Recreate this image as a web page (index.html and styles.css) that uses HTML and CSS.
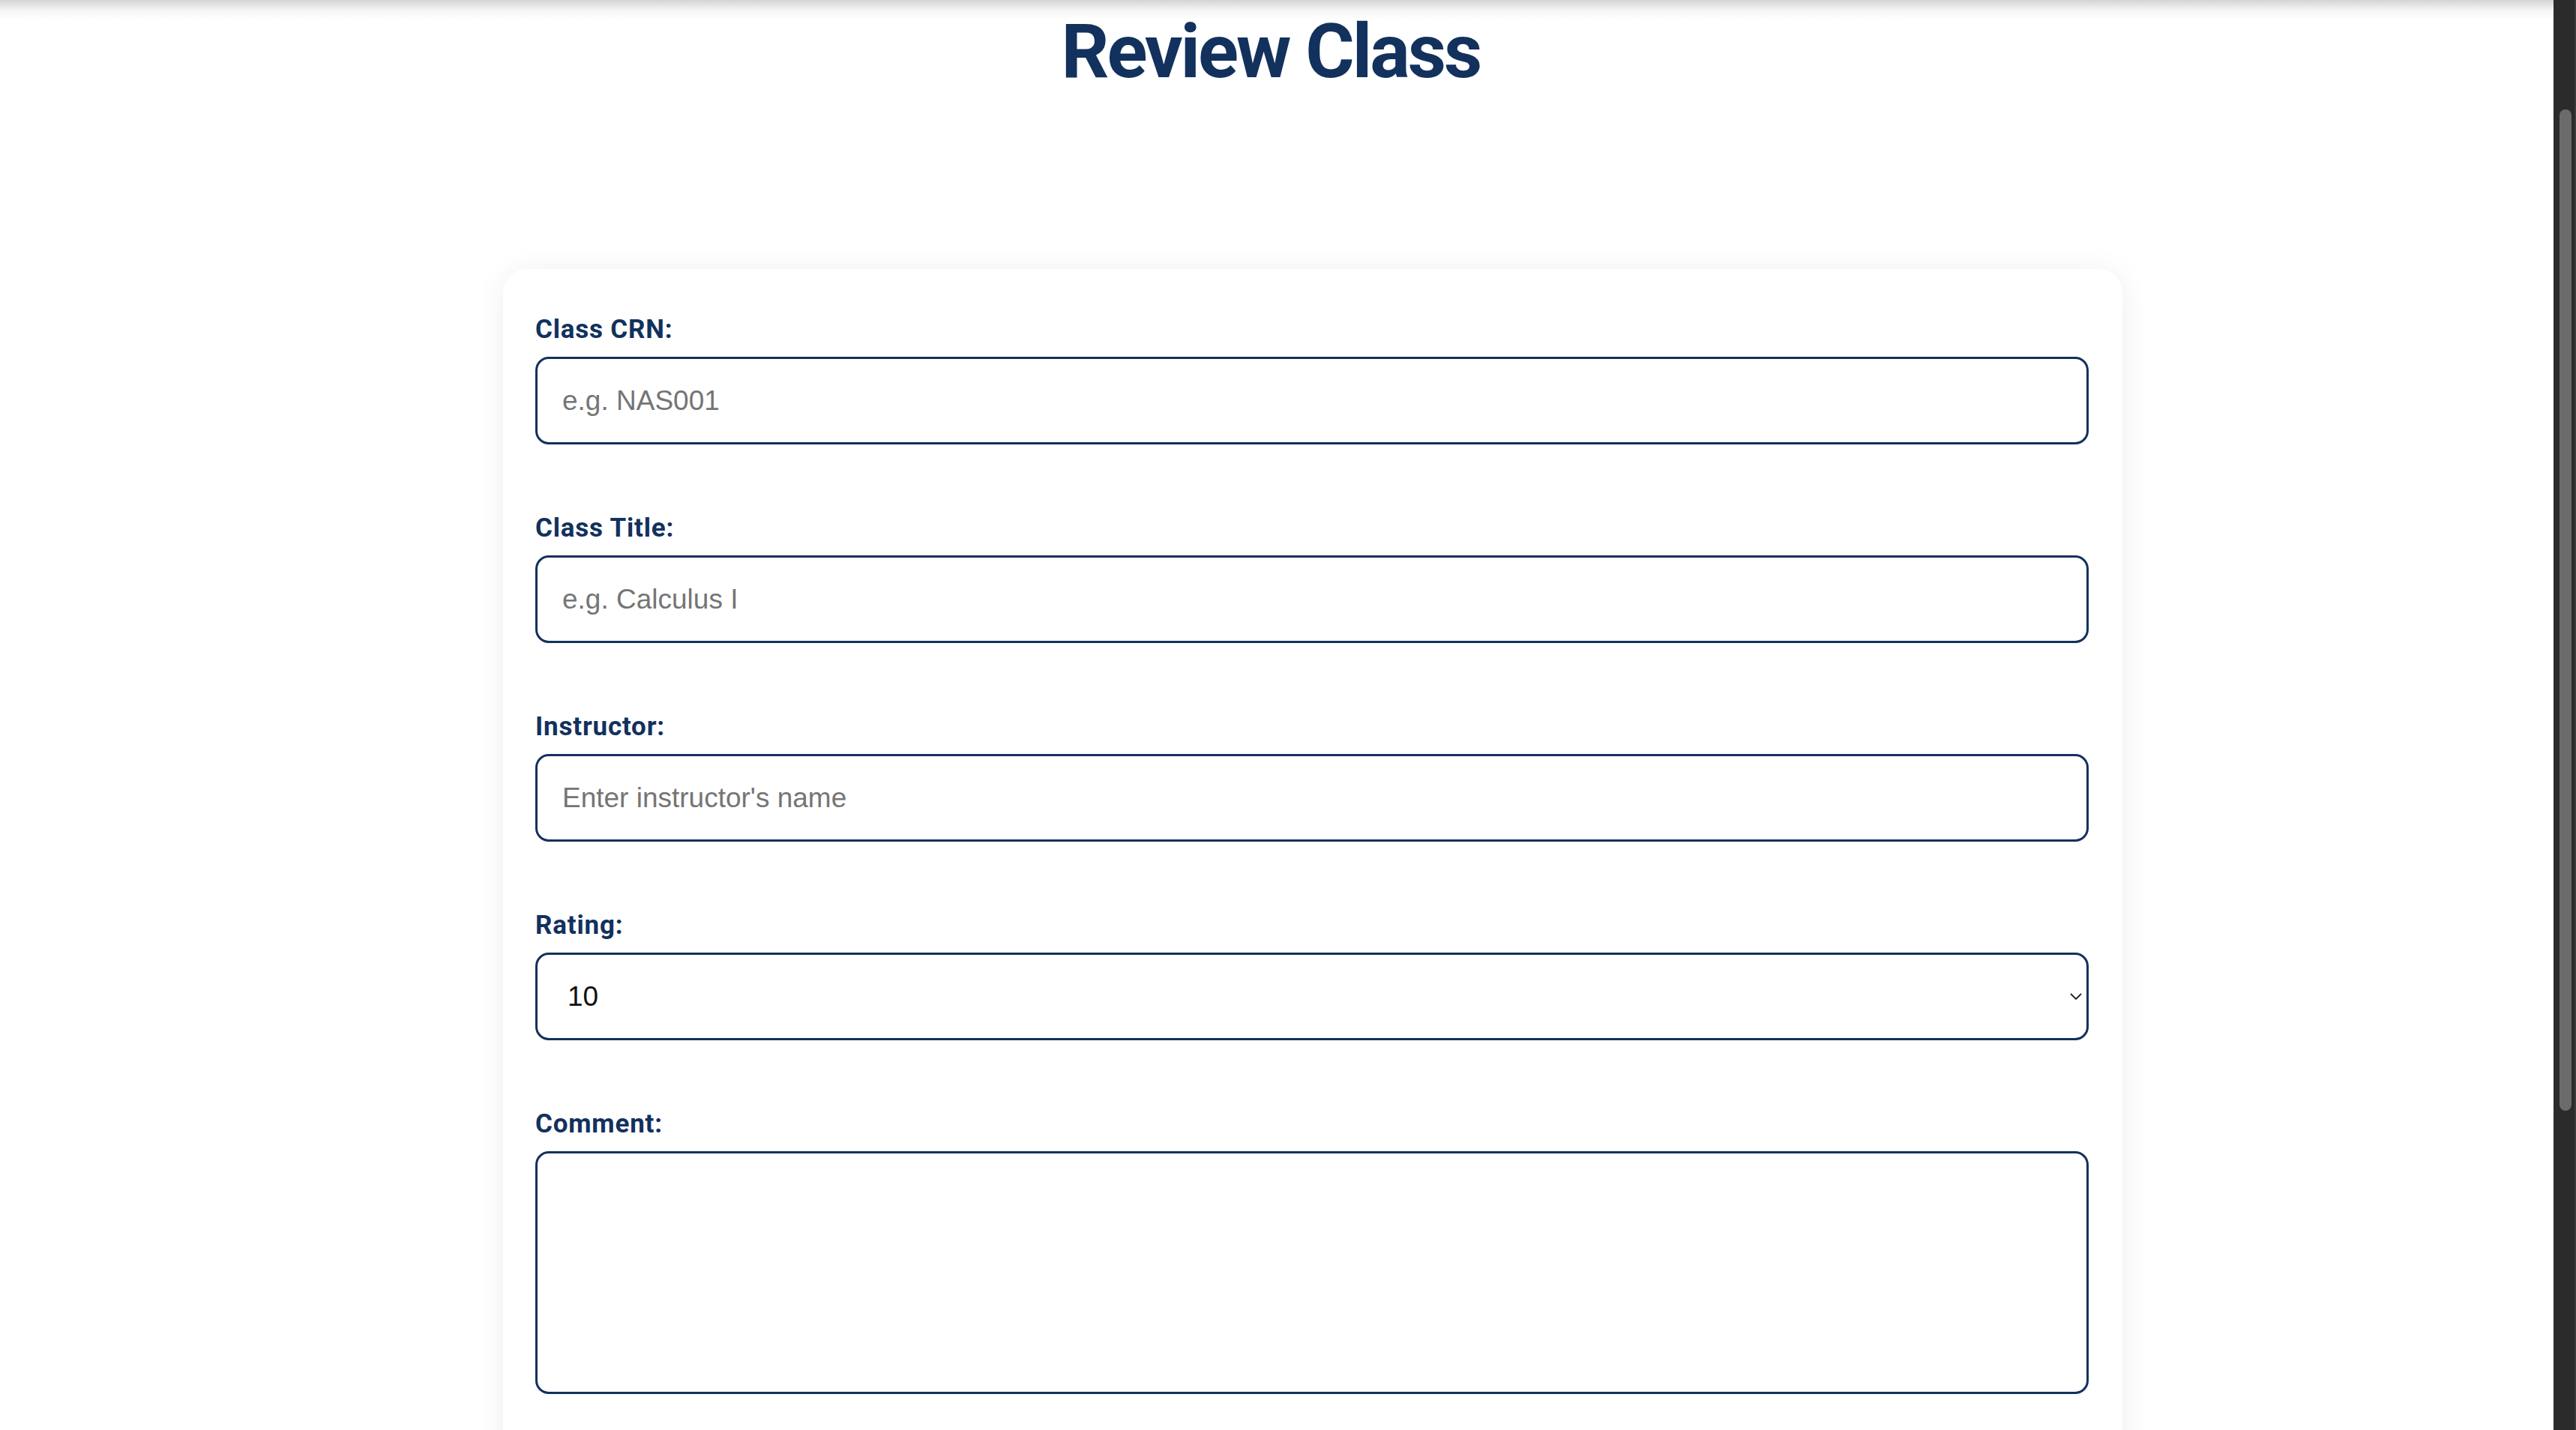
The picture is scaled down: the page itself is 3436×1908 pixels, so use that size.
FILE: index.html
```html
<!DOCTYPE html>
<html lang="en">
<head>
<meta charset="utf-8">
<title>Review Class</title>
<link rel="stylesheet" href="styles.css">
</head>
<body>
<div class="page">
  <h1 class="title">Review Class</h1>
  <form class="card">
    <div class="field">
      <label class="label" for="crn">Class CRN:</label>
      <input class="control" id="crn" type="text" placeholder="e.g. NAS001">
    </div>
    <div class="field">
      <label class="label" for="ctitle">Class Title:</label>
      <input class="control" id="ctitle" type="text" placeholder="e.g. Calculus I">
    </div>
    <div class="field">
      <label class="label" for="instructor">Instructor:</label>
      <input class="control" id="instructor" type="text" placeholder="Enter instructor's name">
    </div>
    <div class="field">
      <label class="label" for="rating">Rating:</label>
      <div class="select-wrap">
        <select class="control select" id="rating">
          <option>10</option>
          <option>9</option>
          <option>8</option>
          <option>7</option>
          <option>6</option>
          <option>5</option>
          <option>4</option>
          <option>3</option>
          <option>2</option>
          <option>1</option>
        </select>
        <svg class="chevron" width="16" height="9" viewBox="0 0 16 9" aria-hidden="true">
          <polyline points="1,1 8,8 15,1" fill="none" stroke="#222" stroke-width="1.8"/>
        </svg>
      </div>
    </div>
    <div class="field">
      <label class="label" for="comment">Comment:</label>
      <textarea class="control textarea" id="comment"></textarea>
    </div>
  </form>
</div>
<div class="scrollbar"><div class="thumb"></div></div>
</body>
</html>
```

FILE: styles.css
```css
html, body {
  margin: 0;
  padding: 0;
  height: 1908px;
  overflow: hidden;
  background: #ffffff;
}

body {
  display: flex;
}

.page {
  flex: 1;
  min-width: 0;
  height: 1908px;
  overflow: hidden;
  background: linear-gradient(#d4d4d4, #f6f6f6 14px, #ffffff 27px) no-repeat;
  background-size: 100% 27px;
}

.title {
  margin: 0;
  padding-top: 9px;
  padding-right: 16px;
  font-family: Roboto, "Liberation Sans", Arial, sans-serif;
  font-weight: 700;
  font-size: 100px;
  line-height: 120px;
  letter-spacing: -3px;
  text-align: center;
  color: #12315d;
}

.card {
  box-sizing: border-box;
  width: 2160px;
  margin: 230px 0 0 671px;
  padding: 61px 45px 100px 43px;
  background: #ffffff;
  border-radius: 32px;
  box-shadow: 0 4px 40px rgba(0, 0, 0, 0.07);
  display: flex;
  flex-direction: column;
  gap: 92px;
}

.field {
  display: flex;
  flex-direction: column;
}

.label {
  display: block;
  font-family: Roboto, "Liberation Sans", Arial, sans-serif;
  font-weight: 700;
  font-size: 35px;
  line-height: 40px;
  letter-spacing: 0.8px;
  color: #12315d;
  margin-bottom: 16px;
}

.control {
  box-sizing: border-box;
  width: 100%;
  height: 117px;
  margin: 0;
  padding: 0 33px;
  border: 3px solid #12315d;
  border-radius: 18px;
  background: #ffffff;
  font-family: "Liberation Sans", Arial, sans-serif;
  font-size: 37px;
  color: #111111;
  outline: none;
}

.control::placeholder {
  color: #757575;
}

.select-wrap {
  position: relative;
}

.select {
  -webkit-appearance: none;
  appearance: none;
  padding-left: 40px;
}

.chevron {
  position: absolute;
  right: 9px;
  top: 54px;
}

.textarea {
  height: 324px;
  padding: 20px 33px;
  resize: none;
  display: block;
}

.scrollbar {
  box-sizing: border-box;
  width: 30px;
  height: 1908px;
  flex: none;
  background: #2b2b2b;
  border-right: 2px solid #3a3a3a;
  padding: 146px 0 0 8px;
}

.thumb {
  width: 16px;
  height: 1336px;
  border-radius: 8px;
  background: #6b6b6b;
}
```
